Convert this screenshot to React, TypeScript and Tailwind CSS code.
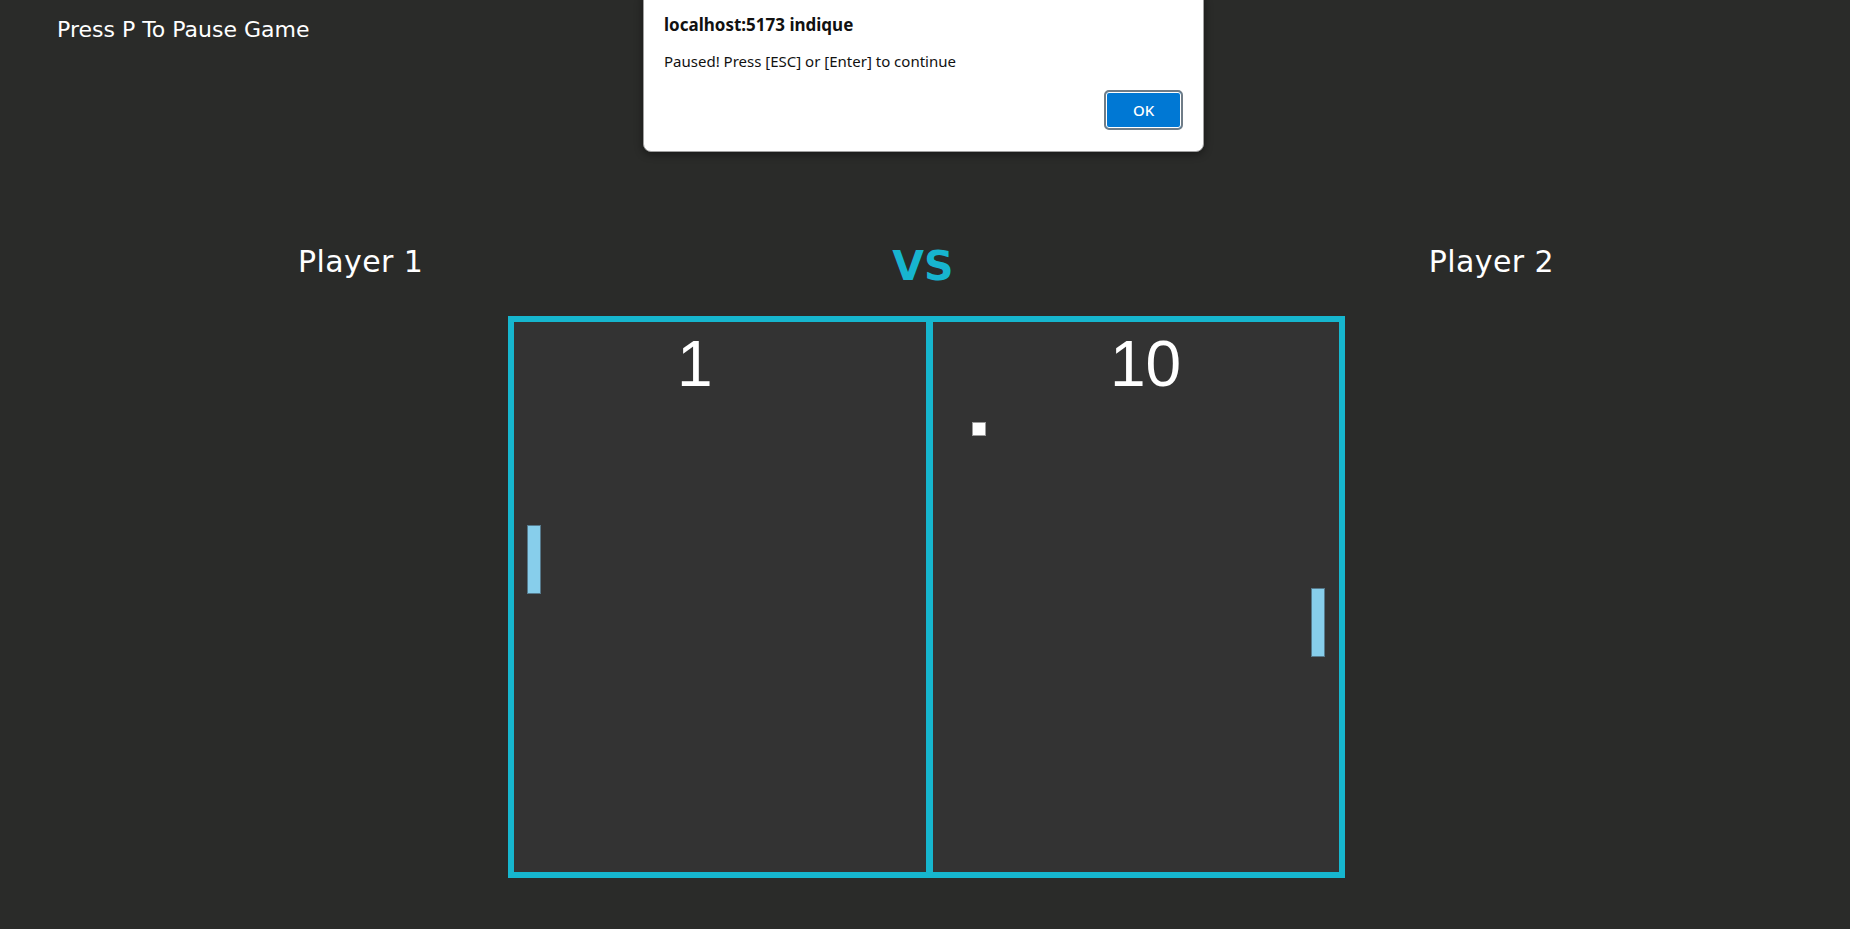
import React from 'react'

const sans = { fontFamily: '"DejaVu Sans", "Noto Sans", sans-serif' }

function Paddle({ className }: { className: string }) {
  return (
    <div
      className={`absolute w-[14px] h-[69px] bg-[#87ceeb] border border-[#56798b] ${className}`}
    />
  )
}

function Score({ value }: { value: number }) {
  return (
    <span className="font-['Liberation_Sans',Arimo,Roboto,sans-serif] text-[64px] leading-[64px] font-normal">
      {value}
    </span>
  )
}

function PauseAlert() {
  return (
    <div
      className="absolute -top-2 left-[643px] w-[561px] bg-white rounded-lg border border-[#a0a0a0] shadow-[0_2px_8px_rgba(0,0,0,0.45)] px-[20px] pt-[23px] pb-[21px] text-[#111]"
      style={{ fontFamily: '"Noto Sans", "Open Sans", sans-serif' }}
    >
      <div className="text-[17px] leading-none font-bold">localhost:5173 indique</div>
      <div className="mt-[21px] text-[15px] leading-none">
        Paused! Press [ESC] or [Enter] to continue
      </div>
      <div className="mt-[21px] flex justify-end">
        <button className="w-[79px] h-[40px] rounded-[5px] border-2 border-[#6f7c87] bg-[#0078d4] shadow-[inset_0_0_0_1px_#ffffff] text-white text-[15px] font-medium">
          OK
        </button>
      </div>
    </div>
  )
}

export default function App() {
  return (
    <div className="relative w-full h-[929px] overflow-hidden bg-[#2a2b29] text-white flex flex-col" style={sans}>
      {/* Top hint */}
      <div className="h-[57px] pl-[57px] pt-[2px] flex items-center text-[22px] leading-none">
        Press P To Pause Game
      </div>

      {/* Players */}
      <div className="mt-[188px] pl-[298px] pr-[296px] flex justify-between items-start">
        <span className="mt-[2px] text-[30px] leading-[30px] tracking-[0.4px]">Player 1</span>
        <span className="mr-[6px] text-[41px] leading-[42px] font-bold text-[#17b5cf]">VS</span>
        <span className="mt-[2px] text-[30px] leading-[30px] tracking-[0.4px]">Player 2</span>
      </div>

      {/* Board */}
      <div className="mt-[29px] ml-[508px] relative w-[837px] h-[562px] border-[6px] border-[#16b6ce] bg-[#333333] flex">
        <div className="w-[412px] pt-[10px] pl-[163px]">
          <Score value={1} />
        </div>
        <div className="w-[7px] bg-[#16b6ce]" />
        <div className="flex-1 pt-[10px] pl-[177px]">
          <Score value={10} />
        </div>

        {/* canvas objects */}
        <Paddle className="left-[13px] top-[203px]" />
        <Paddle className="left-[797px] top-[266px]" />
        <div className="absolute left-[458px] top-[100px] w-[14px] h-[14px] bg-white border border-[#9a9a9a]" />
      </div>

      <PauseAlert />
    </div>
  )
}
